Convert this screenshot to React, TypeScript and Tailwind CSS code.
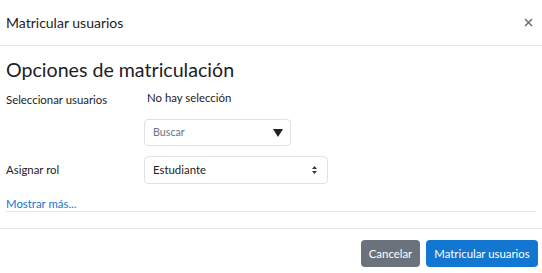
import React from "react";

export default function App() {
  return (
    <div className="w-[542px] h-[273px] bg-white text-[#1d2125] font-['Lato',_sans-serif] flex flex-col overflow-hidden">
      <div className="h-[46px] shrink-0 border-b border-[#e3e6e9] flex items-center justify-between pl-[6px] pr-[8px]">
        <span className="text-[14px]">Matricular usuarios</span>
        <svg width="9" height="9" viewBox="0 0 9 9" className="mr-[1px]"><path d="M1 1L8 8M8 1L1 8" stroke="#6f7478" strokeWidth="1.6" /></svg>
      </div>
      <div className="px-[6px] flex flex-col shrink-0">
        <h2 className="text-[19.6px] h-[28px] leading-[28px] mt-[10px]">Opciones de matriculación</h2>
        <div className="flex mt-[6px]">
          <div className="w-[138px] text-[11.4px] leading-[16px] mt-[2px]">Seleccionar usuarios</div>
          <div className="flex flex-col">
            <div className="text-[11.4px] leading-[16px] pl-[3px]">No hay selección</div>
            <div className="mt-[13px] w-[147px] h-[27px] border border-[#dee2e6] rounded-[4px] flex items-center justify-between pl-[8px] pr-[7px]">
              <span className="text-[10.7px] text-[#6a737b]">Buscar</span>
              <svg width="10" height="8" viewBox="0 0 10 8"><path d="M0 0H10L5 8Z" fill="#1d2125" /></svg>
            </div>
          </div>
        </div>
        <div className="flex items-center mt-[10px]">
          <div className="w-[138px] text-[11.4px]">Asignar rol</div>
          <div className="w-[184px] h-[28px] border border-[#dee2e6] rounded-[4px] flex items-center justify-between pl-[8px] pr-[10px]">
            <span className="text-[11.4px]">Estudiante</span>
            <svg width="5" height="8" viewBox="0 0 5 8"><path d="M0 3L2.5 0L5 3Z M0 5L2.5 8L5 5Z" fill="#343a40" /></svg>
          </div>
        </div>
        <div className="mt-[12px] h-[16px] border-b border-[#e3e6e9]">
          <span className="block text-[11.4px] leading-[15px] text-[#1177d1]">Mostrar más...</span>
        </div>
      </div>
      <div className="mt-[16px] shrink-0 border-t border-[#e3e6e9] flex justify-end gap-[6px] pr-[4px] pt-[11px]">
        <button className="h-[27px] w-[59px] rounded-[4px] bg-[#6a737b] text-white text-[11.4px]">Cancelar</button>
        <button className="h-[27px] w-[112px] rounded-[4px] bg-[#1177d1] text-white text-[11.4px]">Matricular usuarios</button>
      </div>
    </div>
  );
}
